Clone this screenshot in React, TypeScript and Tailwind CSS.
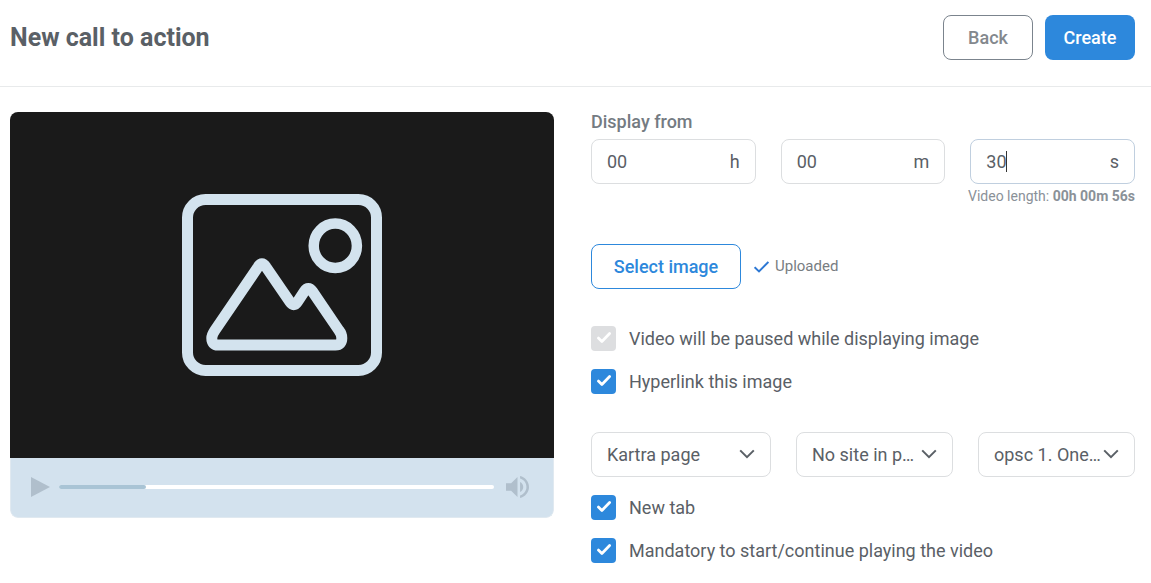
import { useState } from "react";

type CheckProps = { id: string; label: string; disabled?: boolean };

function Check({ id, label, disabled = false }: CheckProps) {
  const [checked, setChecked] = useState(true);
  return (
    <div className="flex items-center gap-[13px]">
      <span className="relative flex size-[25px] shrink-0">
        <input
          id={id}
          type="checkbox"
          checked={checked}
          disabled={disabled}
          onChange={(e) => setChecked(e.target.checked)}
          className="size-full appearance-none rounded border border-[#d9dbdd] checked:border-transparent checked:bg-[#2d88dc] disabled:bg-[#dddee0]"
        />
        {checked && (
          <svg viewBox="0 0 25 25" fill="none" className="pointer-events-none absolute inset-0">
            <path d="M7.4 12.1 L10.9 15.4 L18.6 7.6" stroke="#fff" strokeWidth="2.8" strokeLinecap="round" strokeLinejoin="round" />
          </svg>
        )}
      </span>
      <label htmlFor={id} className="text-lg leading-[25px]">
        {label}
      </label>
    </div>
  );
}

type TimeProps = { unit: string; name: string; value: string; active?: boolean };

function TimeField({ unit, name, value, active = false }: TimeProps) {
  const [text, setText] = useState(value);
  return (
    <div
      className={
        active
          ? "relative flex h-[45px] items-center rounded-lg border border-[#c0cfdf] px-[15px] text-lg"
          : "relative flex h-[45px] items-center rounded-lg border border-[#dcdee0] px-[15px] text-lg"
      }
    >
      <input
        aria-label={name}
        value={text}
        onChange={(e) => setText(e.target.value)}
        className="w-0 min-w-0 flex-1 bg-transparent caret-transparent outline-none"
      />
      <span>{unit}</span>
      {active && <span className="absolute left-[35px] top-[11px] h-[21px] w-px bg-[#333]" />}
    </div>
  );
}

function Dropdown({ name, value }: { name: string; value: string }) {
  return (
    <div className="relative min-w-0">
      <select
        aria-label={name}
        className="block h-[45px] w-full appearance-none truncate rounded-lg border border-[#dcdee0] bg-white pl-[15px] pr-8 text-lg outline-none"
      >
        <option>{value}</option>
      </select>
      <svg width="16" height="10" viewBox="0 0 16 10" fill="none" className="pointer-events-none absolute right-4 top-[17px]">
        <path d="M1.2 1.4 L8 8.2 L14.8 1.4" stroke="#5a6066" strokeWidth="2" />
      </svg>
    </div>
  );
}

function Preview() {
  return (
    <section className="self-start overflow-hidden rounded-lg">
      <div className="flex h-[346px] items-center justify-center bg-[#1a1a1a]">
        <svg width="200" height="182" viewBox="0 0 200 182" fill="none" stroke="#d3e3ee" strokeWidth="11">
          <rect x="5.5" y="5.5" width="189" height="171" rx="18" />
          <ellipse cx="153.3" cy="51.8" rx="21.6" ry="22.2" strokeWidth="10.5" />
          <path
            strokeLinejoin="round"
            d="M36 151 Q29.8 151 29.8 144 Q29.8 141 32.8 136.5 L76 73 Q79.8 66.5 84 73 L108 108 Q111.7 113.5 115.4 108 L122.3 97.5 Q126.3 91.5 130.5 97.5 L157 136.5 Q159.8 140 159.8 144 Q159.8 151 153.5 151 Z"
          />
        </svg>
      </div>
      <div className="flex h-[60px] items-center rounded-b-lg border border-t-0 border-[#e0e9f0] bg-[#d3e2ee] pb-px pl-5 pr-6">
        <button aria-label="Play" className="shrink-0">
          <svg width="19" height="20" viewBox="0 0 19 20">
            <path d="M0 0 L19 10 L0 20 Z" fill="#b0bfcc" />
          </svg>
        </button>
        <div className="ml-[9px] mr-3 h-1 flex-1 rounded-full bg-white">
          <div className="h-full w-1/5 rounded-full bg-[#a9c4d5]" />
        </div>
        <button aria-label="Volume" className="shrink-0">
          <svg width="23" height="22" viewBox="3 3.23 18 17.54" preserveAspectRatio="none">
            <path
              fill="#b0bfcc"
              d="M3 9v6h4l5 5V4L7 9H3zm13.5 3c0-1.77-1.02-3.29-2.5-4.03v8.05c1.48-.73 2.5-2.25 2.5-4.02zM14 3.23v2.06c2.89.86 5 3.54 5 6.71s-2.11 5.85-5 6.71v2.06c4.01-.91 7-4.49 7-8.77s-2.99-7.86-7-8.77z"
            />
          </svg>
        </button>
      </div>
    </section>
  );
}

export default function App() {
  return (
    <main className="bg-white font-['Roboto',sans-serif] text-[#5a6066]">
      <header className="flex items-center justify-between border-b border-[#e8eaeb] pb-[26px] pl-[10px] pr-4 pt-[15px]">
        <h1 className="text-[25px] font-bold leading-[45px]">New call to action</h1>
        <div className="flex gap-3">
          <button className="h-[45px] w-[90px] rounded-lg border border-[#7b848d] text-lg font-medium text-[#83888d]">Back</button>
          <button className="h-[45px] w-[90px] rounded-lg bg-[#2d88dc] text-lg font-medium text-white">Create</button>
        </div>
      </header>

      <div className="grid grid-cols-2 gap-[37px] pb-5 pl-[10px] pr-4 pt-[25px]">
        <Preview />

        <form className="flex flex-col" onSubmit={(e) => e.preventDefault()}>
          <fieldset>
            <legend className="mb-[7px] text-lg font-medium leading-5 text-[#747b82]">Display from</legend>
            <div className="grid grid-cols-3 gap-[25px]">
              <TimeField name="Hours" unit="h" value="00" />
              <TimeField name="Minutes" unit="m" value="00" />
              <TimeField name="Seconds" unit="s" value="30" active />
            </div>
            <p className="mt-[2px] whitespace-nowrap text-right text-sm leading-5 text-[#8a9198]">
              Video length: <b>00h 00m 56s</b>
            </p>
          </fieldset>

          <div className="mt-[38px] flex items-center gap-[13px]">
            <button type="button" className="h-[45px] w-[150px] rounded-lg border border-[#2d88dc] text-lg font-medium text-[#2d88dc]">
              Select image
            </button>
            <span className="flex items-center gap-[6px] text-[15px] text-[#787d82]">
              <svg width="15" height="12" viewBox="0 0 15 12" fill="none">
                <path d="M0.6 6.2 L5 10.4 L14.4 1" stroke="#2d78d4" strokeWidth="2" />
              </svg>
              Uploaded
            </span>
          </div>

          <div className="mt-[37px] flex flex-col gap-[18px]">
            <Check id="paused" label="Video will be paused while displaying image" disabled />
            <Check id="hyperlink" label="Hyperlink this image" />
          </div>

          <div className="mt-[38px] grid grid-cols-[180px_1fr_1fr] gap-[25px]">
            <Dropdown name="Link type" value="Kartra page" />
            <Dropdown name="Site" value="No site in p…" />
            <Dropdown name="Page" value="opsc 1. One…" />
          </div>

          <div className="mt-[18px] flex flex-col gap-[18px]">
            <Check id="new-tab" label="New tab" />
            <Check id="mandatory" label="Mandatory to start/continue playing the video" />
          </div>
        </form>
      </div>
    </main>
  );
}
